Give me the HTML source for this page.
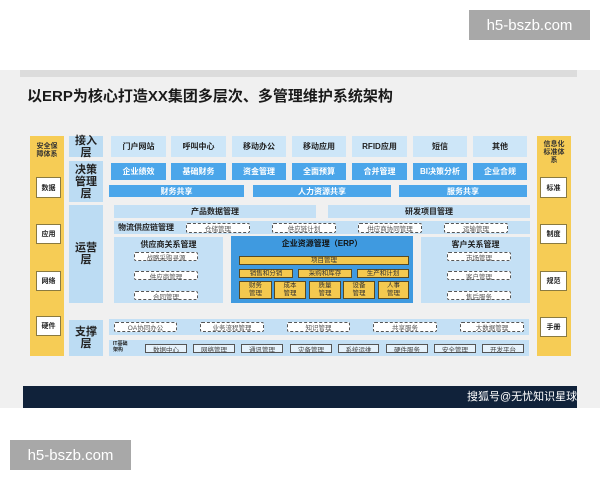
<!DOCTYPE html><html><head><meta charset="utf-8"><style>
*{margin:0;padding:0;box-sizing:border-box}
body{width:600px;height:480px;background:#fff;position:relative;overflow:hidden;font-family:"Liberation Sans","Noto Sans CJK SC",sans-serif;font-weight:bold}
div{position:absolute}
.c{display:flex;align-items:center;justify-content:center;text-align:center}
.y{background:#f6cc55}
.lb{background:#bcdcf3;color:#222;font-size:11px;line-height:12px}
.r1{background:#cde6f8;color:#222;font-size:8px}
.r2{background:#4ba6ea;color:#fff;font-size:8px}
.wb{background:#fff;border:1px solid #8a7a40;font-size:7px;color:#222}
.pn{background:#c4e0f5}
.d{border:1px dashed #555;background:#fff;color:#555;font-size:6.5px;border-radius:2px;font-weight:normal}
.s{border:1px solid #555;background:#e6f2fb;color:#444;font-size:6.5px;font-weight:normal}
.e{background:#f4c94f;border:1px solid #5a4a20;color:#333;font-size:6.5px;line-height:8px;font-weight:normal}
.wm{background:#a8a8a8;color:#fff;font-size:15px;font-weight:normal}
</style></head><body>
<div class="wm c" style="left:469px;top:10px;width:121px;height:30px">h5-bszb.com</div>
<div style="left:0;top:70px;width:600px;height:338px;background:#f0f0f0"></div>
<div style="left:20px;top:70px;width:557px;height:7px;background:#dcdcdc"></div>
<div style="left:27px;top:85px;font-size:15px;color:#1a1a1a;white-space:nowrap">以ERP为核心打造XX集团多层次、多管理维护系统架构</div>

<div class="y" style="left:30px;top:136px;width:34px;height:220px"></div>
<div class="y" style="left:537px;top:136px;width:34px;height:220px"></div>
<div class="c" style="left:30px;top:143px;width:34px;font-size:7px;line-height:8px;color:#333">安全保<br>障体系</div>
<div class="c" style="left:537px;top:141px;width:34px;font-size:7px;line-height:8px;color:#333">信息化<br>标准体<br>系</div>
<div class="wb c" style="left:36px;top:177px;width:25px;height:21px">数据</div>
<div class="wb c" style="left:36px;top:224px;width:25px;height:20px">应用</div>
<div class="wb c" style="left:36px;top:271px;width:25px;height:20px">网络</div>
<div class="wb c" style="left:36px;top:316px;width:25px;height:20px">硬件</div>
<div class="wb c" style="left:540px;top:177px;width:27px;height:21px">标准</div>
<div class="wb c" style="left:540px;top:224px;width:27px;height:20px">制度</div>
<div class="wb c" style="left:540px;top:271px;width:27px;height:20px">规范</div>
<div class="wb c" style="left:540px;top:317px;width:27px;height:20px">手册</div>

<div class="lb c" style="left:69px;top:136px;width:34px;height:21px">接入<br>层</div>
<div class="lb c" style="left:69px;top:161px;width:34px;height:41px">决策<br>管理<br>层</div>
<div class="lb c" style="left:69px;top:205px;width:34px;height:98px">运营<br>层</div>
<div class="lb c" style="left:69px;top:320px;width:34px;height:36px">支撑<br>层</div>

<div class="r1 c" style="left:111px;top:136px;width:55px;height:21px">门户网站</div>
<div class="r1 c" style="left:171px;top:136px;width:55px;height:21px">呼叫中心</div>
<div class="r1 c" style="left:232px;top:136px;width:54px;height:21px">移动办公</div>
<div class="r1 c" style="left:292px;top:136px;width:54px;height:21px">移动应用</div>
<div class="r1 c" style="left:352px;top:136px;width:55px;height:21px">RFID应用</div>
<div class="r1 c" style="left:413px;top:136px;width:54px;height:21px">短信</div>
<div class="r1 c" style="left:473px;top:136px;width:54px;height:21px">其他</div>

<div class="r2 c" style="left:111px;top:163px;width:55px;height:17px">企业绩效</div>
<div class="r2 c" style="left:171px;top:163px;width:55px;height:17px">基础财务</div>
<div class="r2 c" style="left:232px;top:163px;width:54px;height:17px">资金管理</div>
<div class="r2 c" style="left:292px;top:163px;width:54px;height:17px">全面预算</div>
<div class="r2 c" style="left:352px;top:163px;width:55px;height:17px">合并管理</div>
<div class="r2 c" style="left:413px;top:163px;width:54px;height:17px">BI决策分析</div>
<div class="r2 c" style="left:473px;top:163px;width:54px;height:17px">企业合规</div>
<div class="r2 c" style="left:109px;top:185px;width:135px;height:12px">财务共享</div>
<div class="r2 c" style="left:253px;top:185px;width:138px;height:12px">人力资源共享</div>
<div class="r2 c" style="left:399px;top:185px;width:128px;height:12px">服务共享</div>

<div class="pn c" style="left:114px;top:205px;width:202px;height:13px;font-size:8px;color:#222">产品数据管理</div>
<div class="pn c" style="left:328px;top:205px;width:202px;height:13px;font-size:8px;color:#222">研发项目管理</div>
<div class="pn" style="left:114px;top:221px;width:416px;height:13px"></div>
<div style="left:118px;top:222px;font-size:8px;color:#222;white-space:nowrap">物流供应链管理</div>
<div class="d c" style="left:186px;top:223px;width:64px;height:10px">仓储管理</div>
<div class="d c" style="left:272px;top:223px;width:64px;height:10px">供应链计划</div>
<div class="d c" style="left:358px;top:223px;width:64px;height:10px">供应商协同管理</div>
<div class="d c" style="left:444px;top:223px;width:64px;height:10px">运输管理</div>

<div class="pn" style="left:114px;top:237px;width:109px;height:66px"></div>
<div class="c" style="left:114px;top:239px;width:109px;font-size:8px;color:#222">供应商关系管理</div>
<div class="d c" style="left:134px;top:252px;width:64px;height:9px">战略采购寻源</div>
<div class="d c" style="left:134px;top:271px;width:64px;height:9px">供应商管理</div>
<div class="d c" style="left:134px;top:291px;width:64px;height:9px">合同管理</div>
<div class="pn" style="left:421px;top:237px;width:109px;height:66px"></div>
<div class="c" style="left:421px;top:239px;width:109px;font-size:8px;color:#222">客户关系管理</div>
<div class="d c" style="left:447px;top:252px;width:64px;height:9px">市场管理</div>
<div class="d c" style="left:447px;top:271px;width:64px;height:9px">客户管理</div>
<div class="d c" style="left:447px;top:291px;width:64px;height:9px">售后服务</div>

<div style="left:231px;top:236px;width:182px;height:67px;background:#3f9ae0"></div>
<div class="c" style="left:231px;top:238px;width:182px;font-size:8px;color:#111">企业资源管理（ERP）</div>
<div class="e c" style="left:239px;top:256px;width:170px;height:9px">项目管理</div>
<div class="e c" style="left:239px;top:269px;width:54px;height:9px">销售和分销</div>
<div class="e c" style="left:298px;top:269px;width:54px;height:9px">采购和库存</div>
<div class="e c" style="left:357px;top:269px;width:52px;height:9px">生产和计划</div>
<div class="e c" style="left:239px;top:281px;width:33px;height:18px">财务<br>管理</div>
<div class="e c" style="left:274px;top:281px;width:32px;height:18px">成本<br>管理</div>
<div class="e c" style="left:309px;top:281px;width:32px;height:18px">质量<br>管理</div>
<div class="e c" style="left:343px;top:281px;width:32px;height:18px">设备<br>管理</div>
<div class="e c" style="left:378px;top:281px;width:31px;height:18px">人事<br>管理</div>

<div class="pn" style="left:109px;top:319px;width:420px;height:16px"></div>
<div class="d c" style="left:114px;top:322px;width:63px;height:10px">OA协同办公</div>
<div class="d c" style="left:200px;top:322px;width:64px;height:10px">业务流程管理</div>
<div class="d c" style="left:287px;top:322px;width:63px;height:10px">知识管理</div>
<div class="d c" style="left:373px;top:322px;width:64px;height:10px">共享服务</div>
<div class="d c" style="left:460px;top:322px;width:64px;height:10px">大数据管理</div>
<div class="pn" style="left:109px;top:340px;width:420px;height:16px"></div>
<div style="left:113px;top:341px;font-size:5px;line-height:6px;color:#222">IT基础<br>架构</div>
<div class="s c" style="left:145px;top:344px;width:42px;height:9px">数据中心</div>
<div class="s c" style="left:193px;top:344px;width:42px;height:9px">网络管理</div>
<div class="s c" style="left:241px;top:344px;width:42px;height:9px">通讯管理</div>
<div class="s c" style="left:290px;top:344px;width:42px;height:9px">灾备管理</div>
<div class="s c" style="left:338px;top:344px;width:41px;height:9px">系统运维</div>
<div class="s c" style="left:386px;top:344px;width:42px;height:9px">硬件服务</div>
<div class="s c" style="left:434px;top:344px;width:42px;height:9px">安全管理</div>
<div class="s c" style="left:482px;top:344px;width:42px;height:9px">开发平台</div>

<div style="left:23px;top:386px;width:554px;height:22px;background:#10223a"></div>
<div style="left:467px;top:388px;font-size:11px;color:#fff;white-space:nowrap;font-weight:normal">搜狐号@无忧知识星球</div>
<div class="wm c" style="left:10px;top:440px;width:121px;height:30px">h5-bszb.com</div>
</body></html>
